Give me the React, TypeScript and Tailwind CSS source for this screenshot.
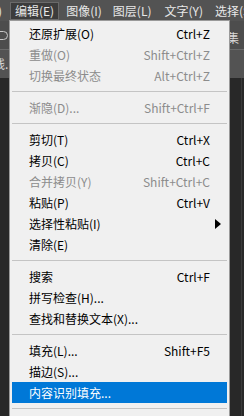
import { Fragment } from "react";

type Item =
  | { sep: true }
  | { sep?: false; label: string; keys?: string; off?: boolean; sub?: boolean; active?: boolean };

const items: Item[] = [
  { label: "还原扩展(O)", keys: "Ctrl+Z" },
  { label: "重做(O)", keys: "Shift+Ctrl+Z", off: true },
  { label: "切换最终状态", keys: "Alt+Ctrl+Z", off: true },
  { sep: true },
  { label: "渐隐(D)...", keys: "Shift+Ctrl+F", off: true },
  { sep: true },
  { label: "剪切(T)", keys: "Ctrl+X" },
  { label: "拷贝(C)", keys: "Ctrl+C" },
  { label: "合并拷贝(Y)", keys: "Shift+Ctrl+C", off: true },
  { label: "粘贴(P)", keys: "Ctrl+V" },
  { label: "选择性粘贴(I)", sub: true },
  { label: "清除(E)" },
  { sep: true },
  { label: "搜索", keys: "Ctrl+F" },
  { label: "拼写检查(H)..." },
  { label: "查找和替换文本(X)..." },
  { sep: true },
  { label: "填充(L)...", keys: "Shift+F5" },
  { label: "描边(S)..." },
  { label: "内容识别填充...", active: true },
  { sep: true },
];

const font = { fontFamily: '"Noto Sans CJK SC", "Noto Sans", sans-serif' };

export default function App() {
  return (
    <div className="relative h-[416px] w-[244px] overflow-hidden bg-[#282828] text-[12px]" style={font}>
      {/* menu bar */}
      <div className="flex h-[21px] items-center whitespace-nowrap bg-[#535353] text-[#e8e8e8]">
        <span className="-ml-[2px] w-[12px] shrink-0">)</span>
        <span className="flex h-[18px] shrink-0 items-center border border-[#6a6a6a] bg-[#3c3c3c] px-[4px]">编辑(E)</span>
        <span className="ml-[7px] shrink-0">图像(I)</span>
        <span className="ml-[11px] shrink-0">图层(L)</span>
        <span className="ml-[13px] shrink-0">文字(Y)</span>
        <span className="ml-[12px] shrink-0">选择(S)</span>
      </div>
      {/* options bar */}
      <div className="flex h-[29px] items-center justify-between border-b border-[#6a6a6a] bg-[#4d4d4d] text-[#d8d8d8]">
        <span className="-ml-[8px] h-[9px] w-[16px] rounded-full border border-[#c8c8c8]" />
        <span className="mr-[5px] mt-[6px]">集</span>
      </div>
      <div className="flex h-[28px] items-center bg-[#535353] text-[#d8d8d8]">
        <span className="-ml-[7px]">线.</span>
      </div>
      <div className="ml-[241px] h-full w-px bg-[#3a3a3a]" />

      {/* dropdown */}
      <div className="absolute left-[10px] top-[21px] w-[219px] bg-[#f0f0f0] px-[2px] pt-[2px] pb-[10px] shadow-[0_0_0_1px_#9a9a9a]">
        {items.map((it, i) =>
          it.sep ? (
            <div key={i} className="flex h-[11px] items-center">
              <div className="h-px w-full bg-[#c4c4c4]" />
            </div>
          ) : (
            <Fragment key={i}>
              <div
                className={`relative flex h-[21px] items-center justify-between whitespace-nowrap pl-[17px] pr-[17px] ${
                  it.active ? "bg-[#0078d7] text-white" : it.off ? "text-[#8c8c8c]" : "text-black"
                }`}
              >
                <span>{it.label}</span>
                {it.keys && <span>{it.keys}</span>}
                {it.sub && (
                  <svg className="absolute right-[6px] top-[6px]" width="6" height="10" viewBox="0 0 6 10">
                    <path d="M0 0 L6 5 L0 10 Z" fill="#000" />
                  </svg>
                )}
              </div>
            </Fragment>
          )
        )}
      </div>
    </div>
  );
}
